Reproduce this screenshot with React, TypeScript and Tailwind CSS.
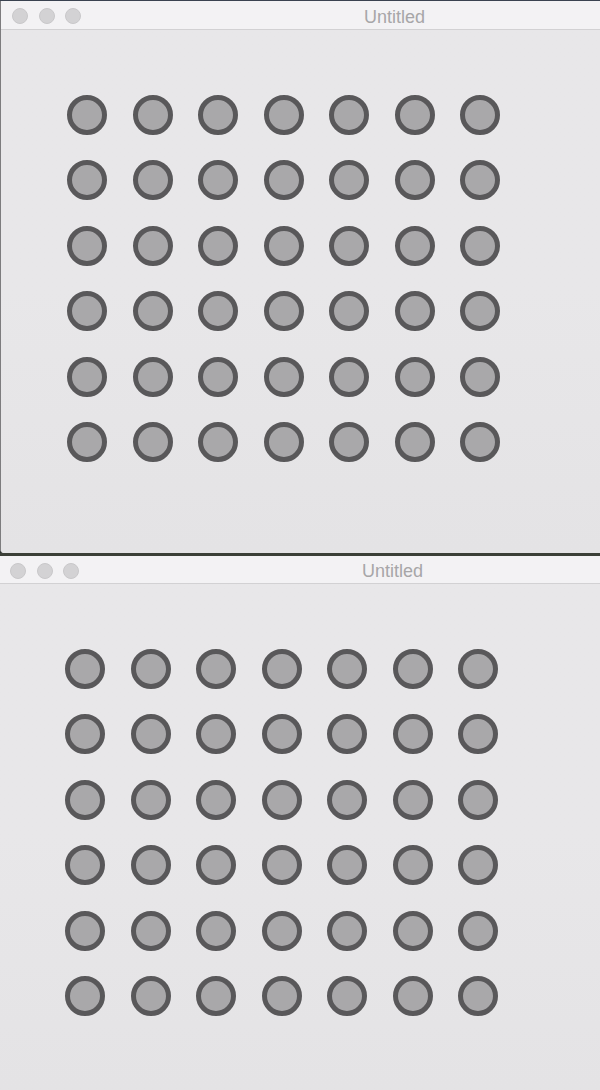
import React from "react";

const ROWS = 6;
const COLS = 7;

function TrafficLights() {
  return (
    <div className="flex items-center gap-[10.5px] mt-[2px]">
      {[0, 1, 2].map((i) => (
        <span
          key={i}
          className="block w-[16px] h-[16px] rounded-full bg-[#d3d2d4] border border-[#c9c8ca]"
        />
      ))}
    </div>
  );
}

function DotGrid() {
  return (
    <div className="grid grid-cols-[repeat(7,40px)] gap-x-[25.5px] gap-y-[25.4px]">
      {Array.from({ length: ROWS * COLS }).map((_, i) => (
        <span
          key={i}
          className="block w-[40px] h-[40px] rounded-full border-[5px] border-[#59585a] bg-[#a9a8aa]"
        />
      ))}
    </div>
  );
}

function MacWindow({
  height,
  barHeight,
  lightsPad,
  titlePad,
  gridLeft,
  className = "",
}: {
  height: string;
  barHeight: string;
  lightsPad: string;
  titlePad: string;
  gridLeft: string;
  className?: string;
}) {
  return (
    <div className={`flex flex-col bg-[#e8e7e9] overflow-hidden ${height} ${className}`}>
      <div className={`flex items-center shrink-0 bg-[#f3f2f4] border-b border-[#d2d1d3] ${barHeight} ${lightsPad}`}>
        <TrafficLights />
        <span
          className={`text-[18px] leading-none text-[#a7a6a8] mt-[3px] ${titlePad}`}
          style={{ fontFamily: '"Liberation Sans", Arial, sans-serif' }}
        >
          Untitled
        </span>
      </div>
      <div className={`flex-1 pt-[65px] bg-gradient-to-b from-[#e8e7e9] via-[#e8e7e9] to-[#e4e3e5] ${gridLeft}`}>
        <DotGrid />
      </div>
    </div>
  );
}

export default function App() {
  return (
    <div className="w-[600px] h-[1090px] overflow-hidden flex flex-col bg-[#2b302c]">
      <div className="h-[1px] shrink-0 bg-[#3a4250]" />
      <MacWindow
        height="h-[552px] shrink-0"
        barHeight="h-[29px]"
        lightsPad="pl-[11px]"
        titlePad="ml-[283px]"
        gridLeft="pl-[66px]"
        className="border-l border-[#7d7c7e] rounded-bl-[4px]"
      />
      <div className="h-[3px] shrink-0 bg-[#3b3f37]" />
      <MacWindow
        height="flex-1"
        barHeight="h-[28px]"
        lightsPad="pl-[10px]"
        titlePad="ml-[283px]"
        gridLeft="pl-[65px]"
      />
    </div>
  );
}
